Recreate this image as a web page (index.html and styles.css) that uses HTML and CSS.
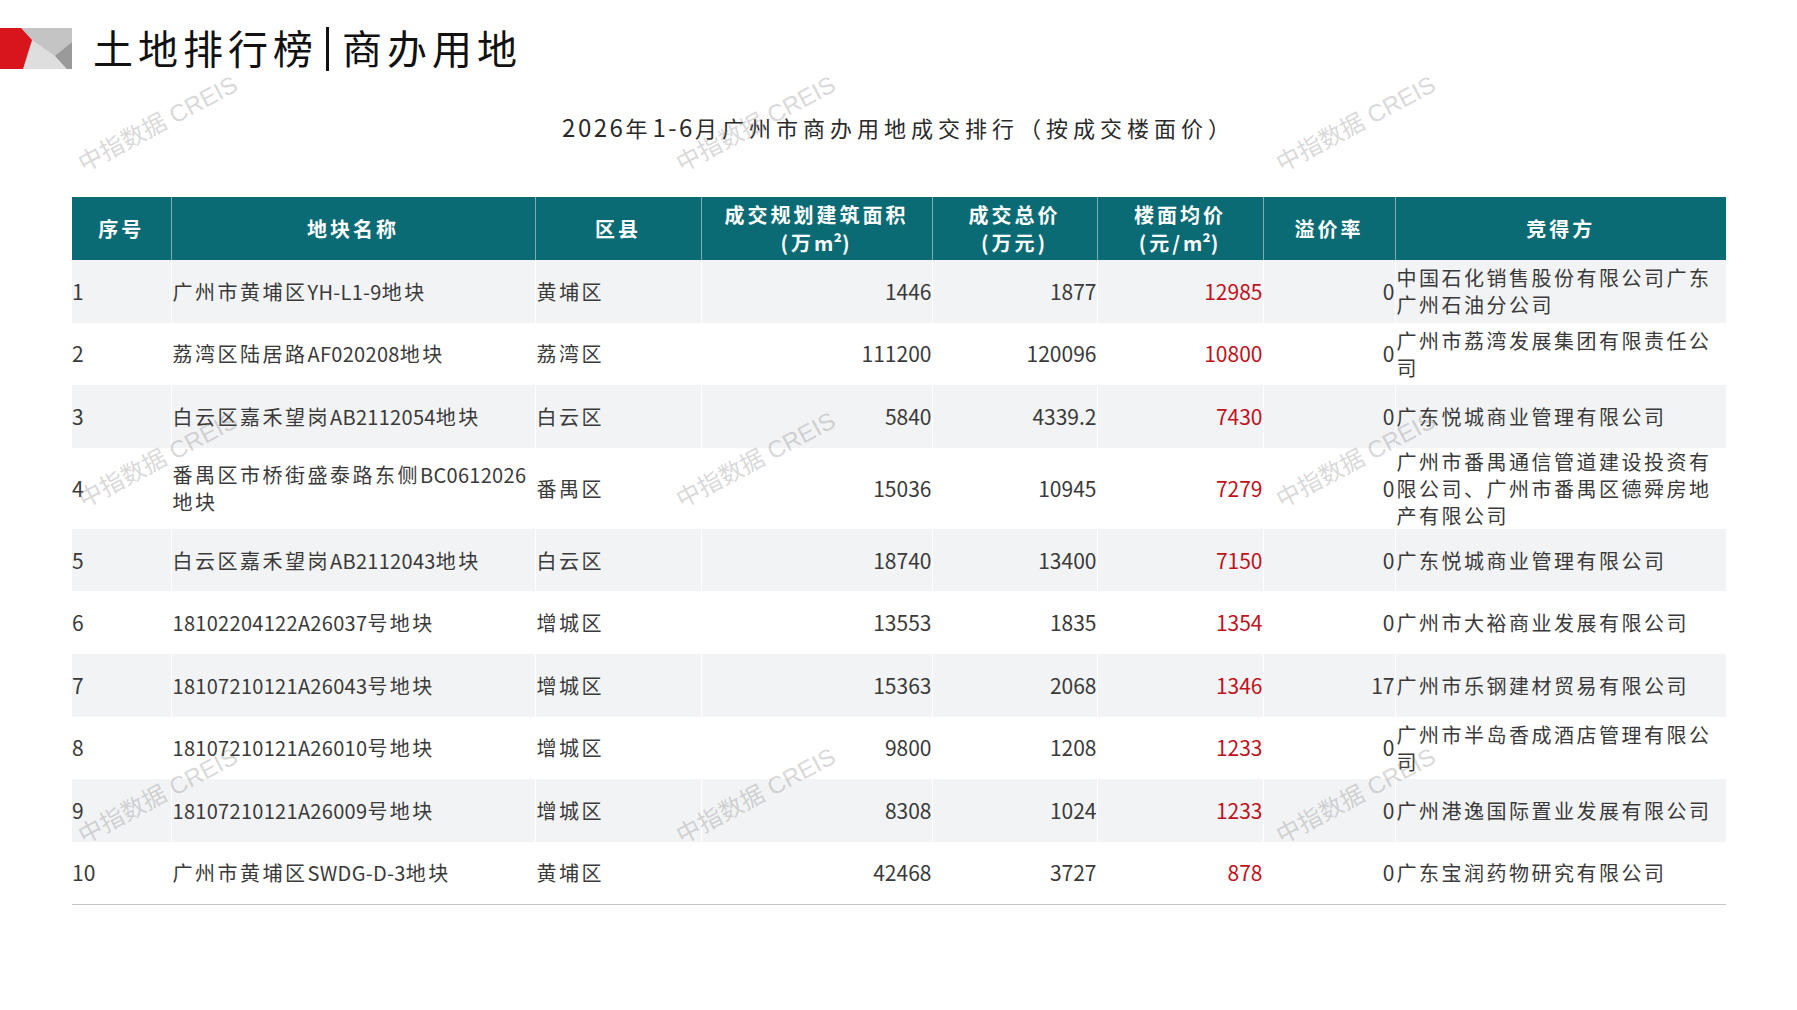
FILE: index.html
```html
<!DOCTYPE html>
<html lang="zh-CN">
<head>
<meta charset="utf-8">
<title>土地排行榜|商办用地</title>
<link rel="stylesheet" href="styles.css">
</head>
<body>
<div class="page">
  <header class="topbar">
    <svg class="logo" width="72" height="41" viewBox="0 0 72 41" aria-hidden="true">
      <rect x="20" y="0" width="52" height="41" fill="#c4c4c4"/>
      <polygon points="32,12 55,28 67,41 22,41" fill="#dedede"/>
      <polygon points="72,14 55,28 67,41 72,41" fill="#9a9a9a"/>
      <polygon points="0,0 21,0 32,12 23,41 0,41" fill="#d8141c"/>
    </svg>
    <h1 class="title"><span>土地排行榜</span><span class="bar"></span><span>商办用地</span></h1>
  </header>

  <h2 class="subtitle"><span class="lat">2026</span>年<span class="lat">1-6</span>月广州市商办用地成交排行（按成交楼面价）</h2>

  <table class="rank">
    <colgroup>
      <col class="c-no"><col class="c-name"><col class="c-dist"><col class="c-area">
      <col class="c-total"><col class="c-price"><col class="c-prem"><col class="c-buyer">
    </colgroup>
    <thead>
      <tr>
        <th>序号</th>
        <th>地块名称</th>
        <th>区县</th>
        <th>成交规划建筑面积<br>(万<span class="unit">m²</span>)</th>
        <th>成交总价<br>(万元)</th>
        <th>楼面均价<br>(元/<span class="unit">m²</span>)</th>
        <th>溢价率</th>
        <th>竞得方</th>
      </tr>
    </thead>
    <tbody>
      <tr>
        <td class="idx">1</td>
        <td class="txt">广州市黄埔区<span class="lat">YH-L1-9</span>地块</td>
        <td class="txt">黄埔区</td>
        <td class="num">1446</td>
        <td class="num">1877</td>
        <td class="num red">12985</td>
        <td class="num">0</td>
        <td class="txt">中国石化销售股份有限公司广东广州石油分公司</td>
      </tr>
      <tr>
        <td class="idx">2</td>
        <td class="txt">荔湾区陆居路<span class="lat">AF020208</span>地块</td>
        <td class="txt">荔湾区</td>
        <td class="num">111200</td>
        <td class="num">120096</td>
        <td class="num red">10800</td>
        <td class="num">0</td>
        <td class="txt">广州市荔湾发展集团有限责任公司</td>
      </tr>
      <tr>
        <td class="idx">3</td>
        <td class="txt">白云区嘉禾望岗<span class="lat">AB2112054</span>地块</td>
        <td class="txt">白云区</td>
        <td class="num">5840</td>
        <td class="num">4339.2</td>
        <td class="num red">7430</td>
        <td class="num">0</td>
        <td class="txt">广东悦城商业管理有限公司</td>
      </tr>
      <tr>
        <td class="idx">4</td>
        <td class="txt">番禺区市桥街盛泰路东侧<span class="lat">BC0612026</span>地块</td>
        <td class="txt">番禺区</td>
        <td class="num">15036</td>
        <td class="num">10945</td>
        <td class="num red">7279</td>
        <td class="num">0</td>
        <td class="txt">广州市番禺通信管道建设投资有限公司、广州市番禺区德舜房地产有限公司</td>
      </tr>
      <tr>
        <td class="idx">5</td>
        <td class="txt">白云区嘉禾望岗<span class="lat">AB2112043</span>地块</td>
        <td class="txt">白云区</td>
        <td class="num">18740</td>
        <td class="num">13400</td>
        <td class="num red">7150</td>
        <td class="num">0</td>
        <td class="txt">广东悦城商业管理有限公司</td>
      </tr>
      <tr>
        <td class="idx">6</td>
        <td class="txt"><span class="lat">18102204122A26037</span>号地块</td>
        <td class="txt">增城区</td>
        <td class="num">13553</td>
        <td class="num">1835</td>
        <td class="num red">1354</td>
        <td class="num">0</td>
        <td class="txt">广州市大裕商业发展有限公司</td>
      </tr>
      <tr>
        <td class="idx">7</td>
        <td class="txt"><span class="lat">18107210121A26043</span>号地块</td>
        <td class="txt">增城区</td>
        <td class="num">15363</td>
        <td class="num">2068</td>
        <td class="num red">1346</td>
        <td class="num">17</td>
        <td class="txt">广州市乐钢建材贸易有限公司</td>
      </tr>
      <tr>
        <td class="idx">8</td>
        <td class="txt"><span class="lat">18107210121A26010</span>号地块</td>
        <td class="txt">增城区</td>
        <td class="num">9800</td>
        <td class="num">1208</td>
        <td class="num red">1233</td>
        <td class="num">0</td>
        <td class="txt">广州市半岛香成酒店管理有限公司</td>
      </tr>
      <tr>
        <td class="idx">9</td>
        <td class="txt"><span class="lat">18107210121A26009</span>号地块</td>
        <td class="txt">增城区</td>
        <td class="num">8308</td>
        <td class="num">1024</td>
        <td class="num red">1233</td>
        <td class="num">0</td>
        <td class="txt">广州港逸国际置业发展有限公司</td>
      </tr>
      <tr>
        <td class="idx">10</td>
        <td class="txt">广州市黄埔区<span class="lat">SWDG-D-3</span>地块</td>
        <td class="txt">黄埔区</td>
        <td class="num">42468</td>
        <td class="num">3727</td>
        <td class="num red">878</td>
        <td class="num">0</td>
        <td class="txt">广东宝润药物研究有限公司</td>
      </tr>
    </tbody>
  </table>

  <div class="wm wm-c1 wm-r1">中指数据 CREIS</div>
  <div class="wm wm-c2 wm-r1">中指数据 CREIS</div>
  <div class="wm wm-c3 wm-r1">中指数据 CREIS</div>
  <div class="wm wm-c1 wm-r2">中指数据 CREIS</div>
  <div class="wm wm-c2 wm-r2">中指数据 CREIS</div>
  <div class="wm wm-c3 wm-r2">中指数据 CREIS</div>
  <div class="wm wm-c1 wm-r3">中指数据 CREIS</div>
  <div class="wm wm-c2 wm-r3">中指数据 CREIS</div>
  <div class="wm wm-c3 wm-r3">中指数据 CREIS</div>
</div>
</body>
</html>
```

FILE: styles.css
```css
* { box-sizing: border-box; }

html, body {
  margin: 0;
  padding: 0;
  background: #ffffff;
}

.page {
  position: relative;
  width: 1797px;
  height: 1010px;
  overflow: hidden;
  background: #ffffff;
  font-family: "Noto Sans CJK SC", "Liberation Sans", sans-serif;
  color: #3a3a3a;
}

/* ---------- top bar ---------- */
.topbar {
  display: flex;
  align-items: center;
  height: 69px;
  padding-top: 28px;
}

.logo {
  display: block;
  flex: none;
}

.title {
  margin: 0 0 0 21px;
  padding-bottom: 4px;
  display: flex;
  align-items: center;
  font-size: 40px;
  line-height: 42px;
  font-weight: 400;
  letter-spacing: 5px;
  color: #111111;
}

.title .bar {
  display: inline-block;
  width: 3px;
  height: 44px;
  background: #111111;
  margin: 4px 13px 0 8px;
}

/* ---------- subtitle ---------- */
.subtitle {
  margin: 43px 0 0 0;
  text-align: center;
  font-size: 22px;
  line-height: 30px;
  font-weight: 400;
  letter-spacing: 5px;
  color: #2a2a2a;
}

.subtitle .lat {
  font-size: 24px;
  letter-spacing: 2.5px;
}

/* ---------- table ---------- */
.rank {
  margin: 55px 0 0 72px;
  width: 1654px;
  table-layout: fixed;
  border-collapse: collapse;
  border-spacing: 0;
}

.c-no    { width: 99px; }
.c-name  { width: 364px; }
.c-dist  { width: 166px; }
.c-area  { width: 231px; }
.c-total { width: 165px; }
.c-price { width: 166px; }
.c-prem  { width: 132px; }
.c-buyer { width: 331px; }

.rank th {
  height: 63px;
  padding: 0;
  background: #0b6b75;
  color: #ffffff;
  font-size: 20px;
  line-height: 28px;
  font-weight: 700;
  letter-spacing: 3px;
  text-align: center;
  vertical-align: middle;
  border-left: 1px solid rgba(255, 255, 255, 0.45);
}

.rank th:first-child { border-left: none; }

.rank th .unit { letter-spacing: 0; }

.rank td {
  height: 62.6px;
  padding: 0;
  font-size: 20px;
  line-height: 27px;
  vertical-align: middle;
  color: #3a3a3a;
  border-left: 1px solid #ffffff;
}

.rank td:first-child { border-left: none; }

.rank tbody tr:nth-child(odd) td { background: #f2f3f5; }

.rank tbody tr:last-child td { border-bottom: 1px solid #c4c4c4; }

.rank .idx {
  font-size: 21px;
  text-align: left;
}

.rank .txt {
  text-align: left;
  letter-spacing: 2.5px;
  padding-left: 1px;
}

.rank .lat {
  letter-spacing: 0.3px;
}

.rank .num {
  text-align: right;
  font-size: 21px;
  letter-spacing: 0;
}

.rank .red { color: #c0121c; }

/* ---------- watermarks ---------- */
.wm {
  position: absolute;
  transform: translate(-50%, -50%) rotate(-28deg);
  font-family: "Liberation Sans", "Noto Sans CJK SC", sans-serif;
  font-size: 24px;
  line-height: 30px;
  color: rgba(120, 120, 120, 0.3);
  white-space: nowrap;
  pointer-events: none;
}

.wm-c1 { left: 158px; }
.wm-c2 { left: 756px; }
.wm-c3 { left: 1356px; }
.wm-r1 { top: 124px; }
.wm-r2 { top: 460px; }
.wm-r3 { top: 796px; }
```
